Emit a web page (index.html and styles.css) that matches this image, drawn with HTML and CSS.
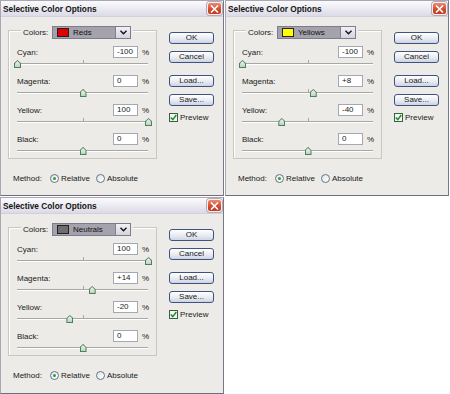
FILE: index.html
```html
<!DOCTYPE html>
<html lang="en">
<head>
    <meta charset="UTF-8">
    <meta name="viewport" content="width=device-width, initial-scale=1.0">
    <title>Selective Color Options</title>
    <link rel="stylesheet" href="styles.css">
</head>
<body>
<div class="sheet">

    <!-- Reds -->
    <div class="dialog">
        <div class="titlebar">
            <span class="title">Selective Color Options</span>
            <span class="close"><svg width="9" height="8" viewBox="0 0 9 8"><path d="M1 0.5 L8 7.5 M8 0.5 L1 7.5" stroke="#fff" stroke-width="1.6"/></svg></span>
        </div>
        <div class="dialog-body">
            <div class="main">
                <div class="group">
                    <div class="group-head">
                        <span class="head-label">Colors:</span>
                        <div class="select">
                            <span class="select-value"><span class="swatch swatch-red"></span>Reds</span>
                            <span class="select-arrow"><svg width="7" height="5" viewBox="0 0 7 5"><path d="M0.5 0.8 L3.5 3.8 L6.5 0.8" fill="none" stroke="#111" stroke-width="1.4"/></svg></span>
                        </div>
                    </div>
                    <div class="channel">
                        <div class="chan-row"><span class="chan-label">Cyan:</span><span class="field">-100</span><span class="pct">%</span></div>
                        <div class="slider"><span class="thumb" style="left: 0%"></span></div>
                    </div>
                    <div class="channel">
                        <div class="chan-row"><span class="chan-label">Magenta:</span><span class="field">0</span><span class="pct">%</span></div>
                        <div class="slider"><span class="thumb" style="left: 50%"></span></div>
                    </div>
                    <div class="channel">
                        <div class="chan-row"><span class="chan-label">Yellow:</span><span class="field">100</span><span class="pct">%</span></div>
                        <div class="slider"><span class="thumb" style="left: 100%"></span></div>
                    </div>
                    <div class="channel">
                        <div class="chan-row"><span class="chan-label">Black:</span><span class="field">0</span><span class="pct">%</span></div>
                        <div class="slider"><span class="thumb" style="left: 50%"></span></div>
                    </div>
                </div>
                <div class="method">
                    <span class="method-label">Method:</span>
                    <span class="radio checked"></span><span class="radio-text">Relative</span>
                    <span class="radio second"></span><span class="radio-text">Absolute</span>
                </div>
            </div>
            <div class="side">
                <span class="btn">OK</span>
                <span class="btn">Cancel</span>
                <span class="btn btn-load">Load...</span>
                <span class="btn">Save...</span>
                <div class="preview"><span class="check"><svg width="7" height="7" viewBox="0 0 7 7"><path d="M0.8 3.5 L2.8 5.6 L6.3 1" fill="none" stroke="#1f8a2e" stroke-width="1.5"/></svg></span>Preview</div>
            </div>
        </div>
    </div>

    <!-- Yellows -->
    <div class="dialog">
        <div class="titlebar">
            <span class="title">Selective Color Options</span>
            <span class="close"><svg width="9" height="8" viewBox="0 0 9 8"><path d="M1 0.5 L8 7.5 M8 0.5 L1 7.5" stroke="#fff" stroke-width="1.6"/></svg></span>
        </div>
        <div class="dialog-body">
            <div class="main">
                <div class="group">
                    <div class="group-head">
                        <span class="head-label">Colors:</span>
                        <div class="select">
                            <span class="select-value"><span class="swatch swatch-yellow"></span>Yellows</span>
                            <span class="select-arrow"><svg width="7" height="5" viewBox="0 0 7 5"><path d="M0.5 0.8 L3.5 3.8 L6.5 0.8" fill="none" stroke="#111" stroke-width="1.4"/></svg></span>
                        </div>
                    </div>
                    <div class="channel">
                        <div class="chan-row"><span class="chan-label">Cyan:</span><span class="field">-100</span><span class="pct">%</span></div>
                        <div class="slider"><span class="thumb" style="left: 0%"></span></div>
                    </div>
                    <div class="channel">
                        <div class="chan-row"><span class="chan-label">Magenta:</span><span class="field">+8</span><span class="pct">%</span></div>
                        <div class="slider"><span class="thumb" style="left: 54%"></span></div>
                    </div>
                    <div class="channel">
                        <div class="chan-row"><span class="chan-label">Yellow:</span><span class="field">-40</span><span class="pct">%</span></div>
                        <div class="slider"><span class="thumb" style="left: 30%"></span></div>
                    </div>
                    <div class="channel">
                        <div class="chan-row"><span class="chan-label">Black:</span><span class="field">0</span><span class="pct">%</span></div>
                        <div class="slider"><span class="thumb" style="left: 50%"></span></div>
                    </div>
                </div>
                <div class="method">
                    <span class="method-label">Method:</span>
                    <span class="radio checked"></span><span class="radio-text">Relative</span>
                    <span class="radio second"></span><span class="radio-text">Absolute</span>
                </div>
            </div>
            <div class="side">
                <span class="btn">OK</span>
                <span class="btn">Cancel</span>
                <span class="btn btn-load">Load...</span>
                <span class="btn">Save...</span>
                <div class="preview"><span class="check"><svg width="7" height="7" viewBox="0 0 7 7"><path d="M0.8 3.5 L2.8 5.6 L6.3 1" fill="none" stroke="#1f8a2e" stroke-width="1.5"/></svg></span>Preview</div>
            </div>
        </div>
    </div>

    <!-- Neutrals -->
    <div class="dialog">
        <div class="titlebar">
            <span class="title">Selective Color Options</span>
            <span class="close"><svg width="9" height="8" viewBox="0 0 9 8"><path d="M1 0.5 L8 7.5 M8 0.5 L1 7.5" stroke="#fff" stroke-width="1.6"/></svg></span>
        </div>
        <div class="dialog-body">
            <div class="main">
                <div class="group">
                    <div class="group-head">
                        <span class="head-label">Colors:</span>
                        <div class="select">
                            <span class="select-value"><span class="swatch swatch-neutral"></span>Neutrals</span>
                            <span class="select-arrow"><svg width="7" height="5" viewBox="0 0 7 5"><path d="M0.5 0.8 L3.5 3.8 L6.5 0.8" fill="none" stroke="#111" stroke-width="1.4"/></svg></span>
                        </div>
                    </div>
                    <div class="channel">
                        <div class="chan-row"><span class="chan-label">Cyan:</span><span class="field">100</span><span class="pct">%</span></div>
                        <div class="slider"><span class="thumb" style="left: 100%"></span></div>
                    </div>
                    <div class="channel">
                        <div class="chan-row"><span class="chan-label">Magenta:</span><span class="field">+14</span><span class="pct">%</span></div>
                        <div class="slider"><span class="thumb" style="left: 57%"></span></div>
                    </div>
                    <div class="channel">
                        <div class="chan-row"><span class="chan-label">Yellow:</span><span class="field">-20</span><span class="pct">%</span></div>
                        <div class="slider"><span class="thumb" style="left: 40%"></span></div>
                    </div>
                    <div class="channel">
                        <div class="chan-row"><span class="chan-label">Black:</span><span class="field">0</span><span class="pct">%</span></div>
                        <div class="slider"><span class="thumb" style="left: 50%"></span></div>
                    </div>
                </div>
                <div class="method">
                    <span class="method-label">Method:</span>
                    <span class="radio checked"></span><span class="radio-text">Relative</span>
                    <span class="radio second"></span><span class="radio-text">Absolute</span>
                </div>
            </div>
            <div class="side">
                <span class="btn">OK</span>
                <span class="btn">Cancel</span>
                <span class="btn btn-load">Load...</span>
                <span class="btn">Save...</span>
                <div class="preview"><span class="check"><svg width="7" height="7" viewBox="0 0 7 7"><path d="M0.8 3.5 L2.8 5.6 L6.3 1" fill="none" stroke="#1f8a2e" stroke-width="1.5"/></svg></span>Preview</div>
            </div>
        </div>
    </div>

</div>
</body>
</html>
```

FILE: styles.css
```css
body {
    margin: 0;
    background: #fff;
    font-family: "Liberation Sans", Arial, sans-serif;
    font-size: 8px;
    color: #1a1a1a;
}

.sheet {
    display: grid;
    grid-template-columns: 224px 224px;
    grid-template-rows: 196px 197px;
    column-gap: 1px;
    row-gap: 1px;
}

.dialog {
    box-sizing: border-box;
    border: 1px solid #a8a7b6;
    border-right-color: #77768a;
    border-bottom-color: #6f6e80;
    background: #ecebe7;
    display: flex;
    flex-direction: column;
}

/* title bar */
.titlebar {
    height: 16px;
    display: flex;
    align-items: center;
    justify-content: space-between;
    padding: 0 1px 0 2px;
    background: linear-gradient(#fbfbfd, #dcdae6);
    border-bottom: 1px solid #d2d0dc;
    box-sizing: border-box;
}

.title {
    font-weight: bold;
    font-size: 8.3px;
    color: #141414;
}

.close {
    width: 15px;
    height: 13px;
    box-sizing: border-box;
    border: 1px solid #fbeeee;
    border-radius: 3px;
    box-shadow: 0 0 0 1px #b7a9b2;
    background: linear-gradient(#eb8a72, #d4492c 60%, #c23a20);
    display: flex;
    align-items: center;
    justify-content: center;
}

.dialog-body {
    display: flex;
}

.main {
    padding: 13px 0 0 7px;
}

/* group box */
.group {
    width: 149px;
    height: 129px;
    box-sizing: border-box;
    border: 1px solid #c9c7c0;
    box-shadow: inset 1px 1px 0 #fff;
    padding: 0 8px;
}

.group-head {
    display: flex;
    align-items: center;
    width: fit-content;
    height: 13px;
    margin: -5px 0 7px 4px;
    padding: 0 2px;
    background: #ecebe7;
}

.head-label {
    width: 29px;
}

.select {
    display: flex;
    height: 13px;
    border: 1px solid #7e7d8c;
    box-sizing: border-box;
}

.select-value {
    width: 62px;
    display: flex;
    align-items: center;
    background: #a4a3ad;
    color: #111;
    border-right: 1px solid #807f8c;
}

.swatch {
    width: 10px;
    height: 7px;
    margin: 0 4px 0 4px;
    border: 1px solid #222;
}

.swatch-red { background: #e10000; }
.swatch-yellow { background: #ffff00; }
.swatch-neutral { background: #6e6e6e; }

.select-arrow {
    width: 14px;
    display: flex;
    align-items: center;
    justify-content: center;
    background: linear-gradient(#f1f1f5, #d4d4de);
}

/* channels */
.channel {
    height: 29px;
}

.channel:last-child {
    height: 25px;
}

.chan-row {
    display: flex;
    align-items: center;
    height: 12px;
}

.chan-label {
    flex: 1;
}

.field {
    width: 25px;
    height: 12px;
    box-sizing: border-box;
    border: 1px solid #a3a9b2;
    background: #fff;
    padding-left: 3px;
    line-height: 10px;
}

.pct {
    width: 6px;
    margin-left: 4px;
}

.slider {
    position: relative;
    height: 17px;
}

.slider::before {
    content: "";
    position: absolute;
    left: 0;
    right: 0;
    top: 5px;
    height: 1px;
    background: #a7a7a4;
    box-shadow: 0 1px 0 #fff;
}

.slider::after {
    content: "";
    position: absolute;
    left: 50%;
    top: 2px;
    width: 1px;
    height: 3px;
    background: #a7a7a4;
}

.thumb {
    position: absolute;
    top: 2px;
    width: 7px;
    height: 8px;
    margin-left: -3px;
    z-index: 1;
    background: #4f7d62;
    clip-path: polygon(50% 0, 100% 40%, 100% 100%, 0 100%, 0 40%);
}

.thumb::after {
    content: "";
    position: absolute;
    left: 1px;
    top: 1px;
    right: 1px;
    bottom: 1px;
    background: linear-gradient(#eef6ec, #bcd5bd);
    clip-path: polygon(50% 0, 100% 40%, 100% 100%, 0 100%, 0 40%);
}

/* method radios */
.method {
    display: flex;
    align-items: center;
    height: 12px;
    margin-top: 13px;
    padding-left: 5px;
}

.method-label {
    width: 37px;
}

.radio {
    width: 9px;
    height: 9px;
    box-sizing: border-box;
    border: 1px solid #5d7692;
    border-radius: 50%;
    background: linear-gradient(135deg, #e4e4de, #fff);
    display: flex;
    align-items: center;
    justify-content: center;
}

.radio.checked::after {
    content: "";
    width: 3px;
    height: 3px;
    border-radius: 50%;
    background: #2f9a45;
}

.radio.second {
    margin-left: 6px;
}

.radio-text {
    margin-left: 2px;
}

/* buttons */
.side {
    display: flex;
    flex-direction: column;
    padding-top: 15px;
    margin-left: 12px;
}

.btn {
    width: 45px;
    height: 12px;
    box-sizing: border-box;
    border: 1px solid #3f5280;
    border-radius: 3px;
    background: linear-gradient(#ffffff, #e6e9f0 60%, #cdd3e4);
    text-align: center;
    line-height: 10px;
    margin-bottom: 7px;
}

.btn-load {
    margin-top: 5px;
}

.preview {
    display: flex;
    align-items: center;
}

.check {
    width: 9px;
    height: 9px;
    box-sizing: border-box;
    border: 1px solid #37604a;
    background: #f5f5f0;
    display: flex;
    align-items: center;
    justify-content: center;
    margin-right: 2px;
}
```
